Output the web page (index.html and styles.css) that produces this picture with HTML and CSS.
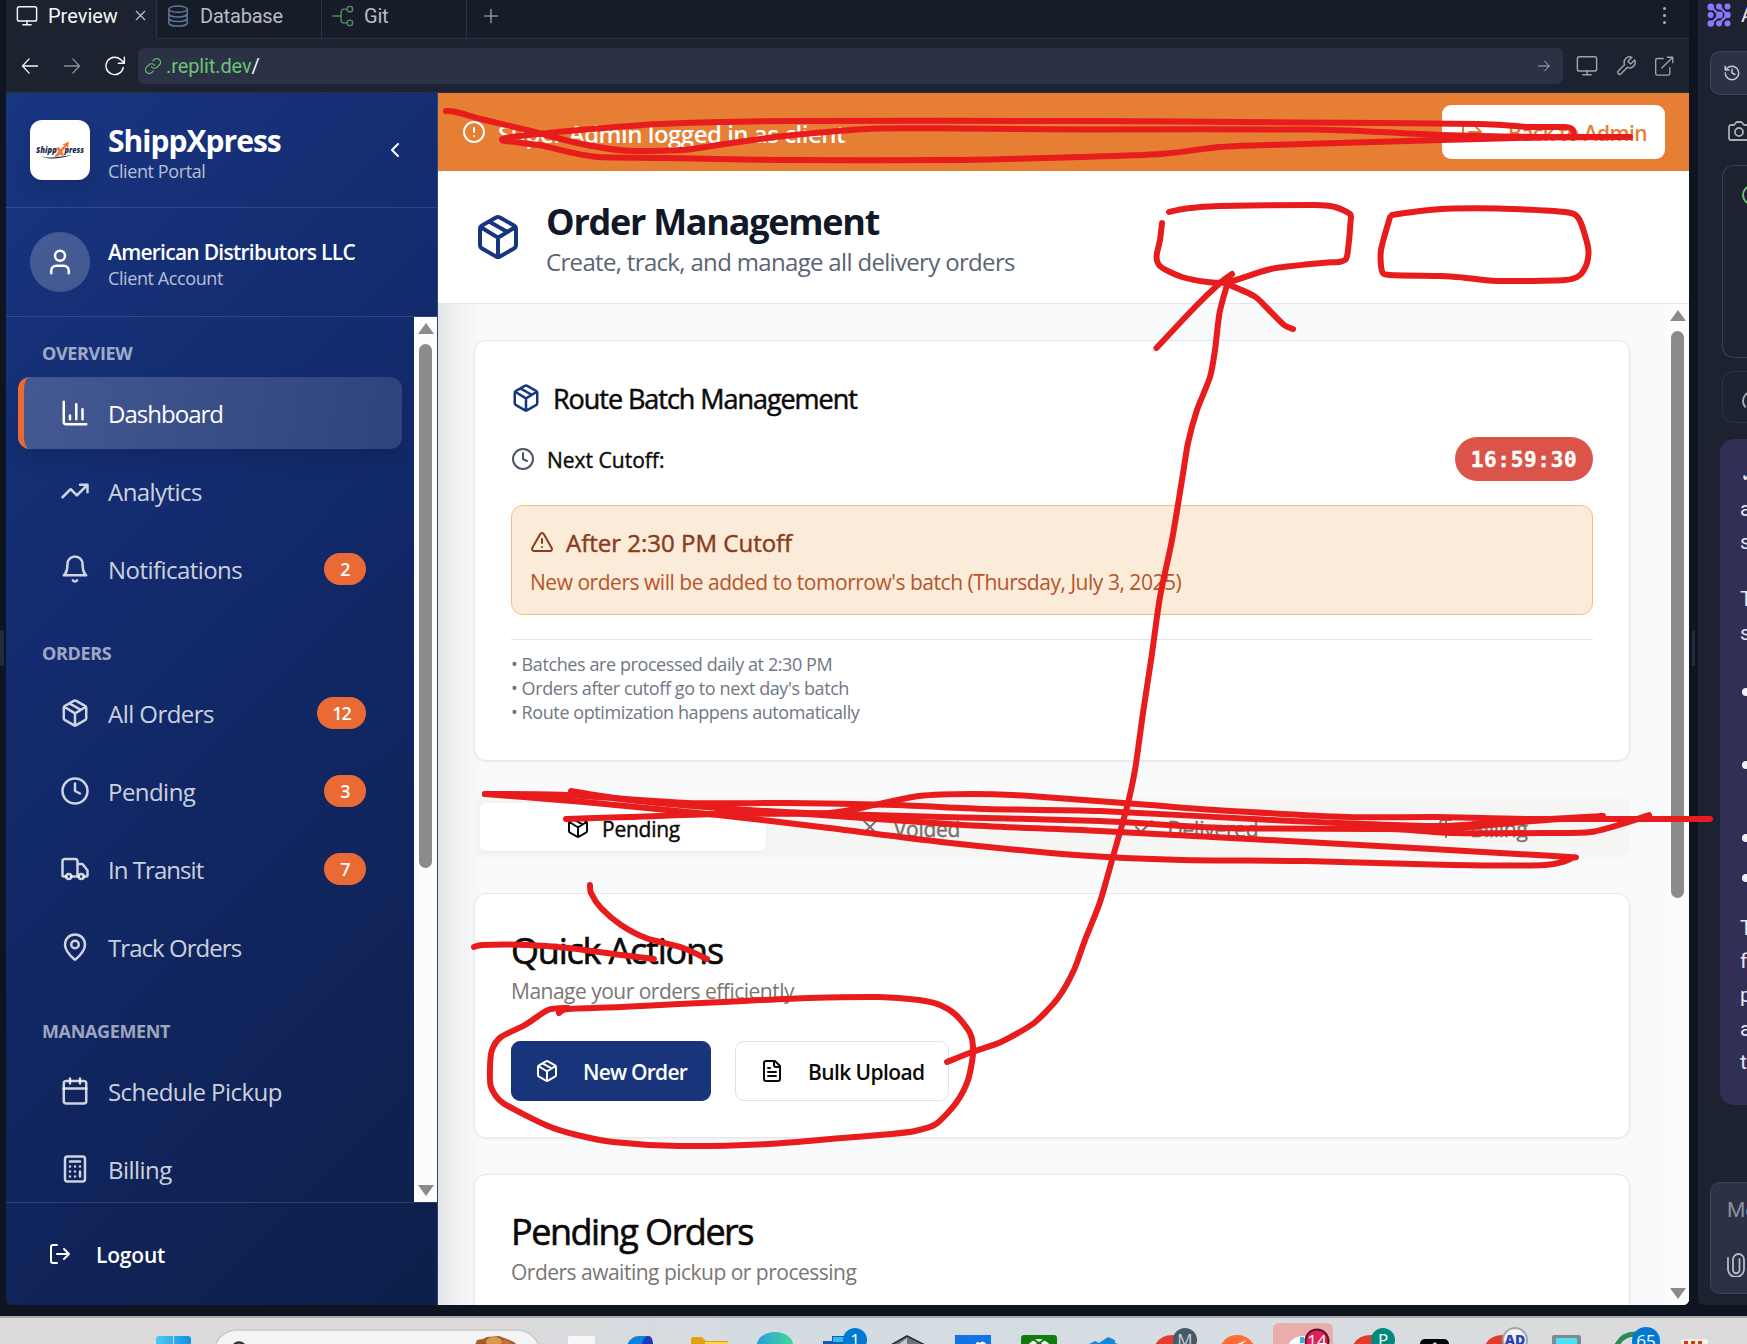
FILE: index.html
```html
<!DOCTYPE html>
<html lang="en">
<head>
<meta charset="utf-8">
<title>ShippXpress - Order Management</title>
<link rel="stylesheet" href="styles.css">
</head>
<body>
<svg class="defs" aria-hidden="true">
  <symbol id="package" viewBox="0 0 24 24"><path d="M11 21.73a2 2 0 0 0 2 0l7-4A2 2 0 0 0 21 16V8a2 2 0 0 0-1-1.73l-7-4a2 2 0 0 0-2 0l-7 4A2 2 0 0 0 3 8v8a2 2 0 0 0 1 1.73zM12 22V12M3.3 7l7.703 4.734a2 2 0 0 0 1.994 0L20.7 7M7.5 4.27l9 5.15"/></symbol>
  <symbol id="chart" viewBox="0 0 24 24"><path d="M3 3v16a2 2 0 0 0 2 2h16M18 17V9M13 17V5M8 17v-3"/></symbol>
  <symbol id="trend" viewBox="0 0 24 24"><path d="M22 7l-8.500 8.500-5-5L2 17M16 7h6v6"/></symbol>
  <symbol id="bell" viewBox="0 0 24 24"><path d="M6 8a6 6 0 0 1 12 0c0 7 3 9 3 9H3s3-2 3-9M10.300 21a1.940 1.940 0 0 0 3.400 0"/></symbol>
  <symbol id="clock" viewBox="0 0 24 24"><circle cx="12" cy="12" r="10"/><path d="M12 6v6l4 2"/></symbol>
  <symbol id="truck" viewBox="0 0 24 24"><path d="M14 18V6a2 2 0 0 0-2-2H4a2 2 0 0 0-2 2v11a1 1 0 0 0 1 1h2M15 18H9M19 18h2a1 1 0 0 0 1-1v-3.650a1 1 0 0 0-.22-.624l-3.480-4.350A1 1 0 0 0 17.520 8H14"/><circle cx="17" cy="18" r="2"/><circle cx="7" cy="18" r="2"/></symbol>
  <symbol id="pin" viewBox="0 0 24 24"><path d="M20 10c0 4.993-5.539 10.193-7.399 11.799a1 1 0 0 1-1.202 0C9.539 20.193 4 14.993 4 10a8 8 0 0 1 16 0"/><circle cx="12" cy="10" r="3"/></symbol>
  <symbol id="calendar" viewBox="0 0 24 24"><rect x="3" y="4" width="18" height="18" rx="2"/><path d="M8 2v4M16 2v4M3 10h18"/></symbol>
  <symbol id="calc" viewBox="0 0 24 24"><rect x="4" y="2" width="16" height="20" rx="2"/><path d="M8 6h8M16 14v4M16 10h.01M12 10h.01M8 10h.01M12 14h.01M8 14h.01M12 18h.01M8 18h.01"/></symbol>
  <symbol id="logout" viewBox="0 0 24 24"><path d="M9 21H5a2 2 0 0 1-2-2V5a2 2 0 0 1 2-2h4M16 17l5-5-5-5M21 12H9"/></symbol>
  <symbol id="user" viewBox="0 0 24 24"><path d="M19 21v-2a4 4 0 0 0-4-4H9a4 4 0 0 0-4 4v2"/><circle cx="12" cy="7" r="4"/></symbol>
  <symbol id="alert" viewBox="0 0 24 24"><circle cx="12" cy="12" r="10"/><path d="M12 8v4M12 16h.01"/></symbol>
  <symbol id="warn" viewBox="0 0 24 24"><path d="M21.730 18l-8-14a2 2 0 0 0-3.480 0l-8 14A2 2 0 0 0 4 21h16a2 2 0 0 0 1.730-3M12 9v4M12 17h.01"/></symbol>
  <symbol id="file" viewBox="0 0 24 24"><path d="M15 2H6a2 2 0 0 0-2 2v16a2 2 0 0 0 2 2h12a2 2 0 0 0 2-2V7ZM14 2v4a2 2 0 0 0 2 2h4M10 9H8M16 13H8M16 17H8"/></symbol>
  <symbol id="chevron" viewBox="0 0 24 24"><path d="M15 18l-6-6 6-6"/></symbol>
  <symbol id="x" viewBox="0 0 24 24"><path d="M18 6L6 18M6 6l12 12"/></symbol>
  <symbol id="check" viewBox="0 0 24 24"><path d="M20 6L9 17l-5-5"/></symbol>
  <symbol id="dollar" viewBox="0 0 24 24"><path d="M12 2v20M17 5H9.500a3.500 3.500 0 0 0 0 7h5a3.500 3.500 0 0 1 0 7H6"/></symbol>
  <symbol id="monitor" viewBox="0 0 24 24"><rect x="1.500" y="2" width="21" height="15.500" rx="2"/><path d="M12 17.500V21.500M7.500 21.500h9"/></symbol>
  <symbol id="plus" viewBox="0 0 24 24"><path d="M12 2v20M2 12h20"/></symbol>
  <symbol id="left" viewBox="0 0 24 24"><path d="M21 12H3.500M11 3.500L3 12l8 8.500"/></symbol>
  <symbol id="right" viewBox="0 0 24 24"><path d="M3 12h17.500M13 3.500l8 8.500-8 8.500"/></symbol>
  <symbol id="reload" viewBox="0 0 24 24"><path d="M21 13.500a9.500 9.500 0 1 1-2.300-8L22 8.500M22.200 2.500v6.500h-6.500"/></symbol>
  <symbol id="link" viewBox="0 0 24 24"><path d="M10 13a5 5 0 0 0 7.540.54l3-3a5 5 0 0 0-7.070-7.070l-1.720 1.710M14 11a5 5 0 0 0-7.540-.54l-3 3a5 5 0 0 0 7.070 7.070l1.710-1.710"/></symbol>
  <symbol id="db" viewBox="0 0 24 24"><ellipse cx="12" cy="4.500" rx="10" ry="3.500"/><path d="M2 4.500v15c0 2 4.500 3.500 10 3.500s10-1.500 10-3.500v-15M2 9.500c0 2 4.500 3.500 10 3.500s10-1.500 10-3.500M2 14.500c0 2 4.500 3.500 10 3.500s10-1.500 10-3.500"/></symbol>
  <symbol id="git" viewBox="0 0 24 24"><path d="M1 12h9M16 4.500h-3a3 3 0 0 0-3 3v9a3 3 0 0 0 3 3h3"/><circle cx="19.500" cy="4.500" r="3"/><circle cx="19.500" cy="19.500" r="3"/></symbol>
  <symbol id="wrench" viewBox="0 0 24 24"><path d="M14.700 6.300a1 1 0 0 0 0 1.400l1.600 1.600a1 1 0 0 0 1.400 0l3.770-3.770a6 6 0 0 1-7.940 7.940l-6.910 6.910a2.120 2.120 0 0 1-3-3l6.910-6.910a6 6 0 0 1 7.940-7.940z"/></symbol>
  <symbol id="external" viewBox="0 0 24 24"><path d="M11 3H4a2 2 0 0 0-2 2v16a2 2 0 0 0 2 2h13a2 2 0 0 0 2-2v-7M16 1.500h6.500V8M22.500 1.500L9.500 14.500"/></symbol>
  <symbol id="history" viewBox="0 0 24 24"><path d="M3 12a9 9 0 1 0 9-9 9.750 9.750 0 0 0-6.740 2.740L3 8M3 3v5h5M12 7v5l4 2"/></symbol>
  <symbol id="camera" viewBox="0 0 24 24"><path d="M14.500 3h-5L7 6H4a2 2 0 0 0-2 2v11a2 2 0 0 0 2 2h16a2 2 0 0 0 2-2V8a2 2 0 0 0-2-2h-3z"/><circle cx="12" cy="13" r="4"/></symbol>
  <symbol id="clip" viewBox="0 0 24 24"><path d="M15.500 6v11a3 3 0 0 1-6.500 0V6.500a5 5 0 0 1 11 0V16a8 8 0 0 1-16 0V5"/></symbol>
</svg>

<div class="workspace">
  <div class="gutter"><span class="grip"></span></div>
  <section class="pane">
    <div class="tabbar">
      <div class="tab tab-active"><svg class="i22"><use href="#monitor"/></svg><span>Preview</span><svg class="i17 close"><use href="#x"/></svg></div>
      <div class="tab tab-db"><svg class="i22 blue"><use href="#db"/></svg><span>Database</span></div>
      <div class="tab tab-git"><svg class="i22 green"><use href="#git"/></svg><span>Git</span></div>
      <div class="tab-rest"><svg class="i16"><use href="#plus"/></svg><span class="dots"><i></i><i></i><i></i></span></div>
    </div>
    <div class="toolbar">
      <svg class="i20 bright"><use href="#left"/></svg>
      <svg class="i20 dim"><use href="#right"/></svg>
      <svg class="i22 bright"><use href="#reload"/></svg>
      <div class="url"><svg class="i18"><use href="#link"/></svg><span class="host">.replit.dev<b>/</b></span><svg class="i14 go"><use href="#right"/></svg></div>
      <svg class="i22 tool"><use href="#monitor"/></svg>
      <svg class="i22 tool"><use href="#wrench"/></svg>
      <svg class="i20 tool"><use href="#external"/></svg>
    </div>
    <div class="app">
      <aside class="sidebar">
        <div class="brand">
          <div class="logo"><svg viewBox="0 0 60 60" width="60" height="60"><text x="6" y="33" textLength="21" lengthAdjust="spacingAndGlyphs" class="lg">Shipp</text><text x="34.500" y="33" textLength="19.500" lengthAdjust="spacingAndGlyphs" class="lg">press</text><path d="M24 36.500L34.500 25l-2.500-.3 7-3.200-1 6.500-1.700-1.500-8 10z" fill="#f0793a"/><path d="M26 27.500h3.500l5 8H31z" fill="#f0793a"/><path d="M11 36c8 3 16 1 31-1-12 4-24 5-31 1z" fill="#1b2c50"/></svg></div>
          <div class="names"><div class="brand-name">ShippXpress</div><div class="muted">Client Portal</div></div>
          <svg class="i24 collapse"><use href="#chevron"/></svg>
        </div>
        <div class="account">
          <div class="avatar"><svg class="i30"><use href="#user"/></svg></div>
          <div class="names"><div class="acct-name">American Distributors LLC</div><div class="muted">Client Account</div></div>
        </div>
        <div class="navwrap">
          <nav class="nav">
            <div class="group"><div class="label">OVERVIEW</div>
              <a class="item current"><svg class="i30"><use href="#chart"/></svg><span>Dashboard</span></a>
              <a class="item"><svg class="i30"><use href="#trend"/></svg><span>Analytics</span></a>
              <a class="item"><svg class="i30"><use href="#bell"/></svg><span>Notifications</span><em>2</em></a></div>
            <div class="group"><div class="label">ORDERS</div>
              <a class="item"><svg class="i30"><use href="#package"/></svg><span>All Orders</span><em>12</em></a>
              <a class="item"><svg class="i30"><use href="#clock"/></svg><span>Pending</span><em>3</em></a>
              <a class="item snug"><svg class="i30"><use href="#truck"/></svg><span>In Transit</span><em>7</em></a>
              <a class="item snug"><svg class="i30"><use href="#pin"/></svg><span>Track Orders</span></a></div>
            <div class="group"><div class="label">MANAGEMENT</div>
              <a class="item"><svg class="i30"><use href="#calendar"/></svg><span>Schedule Pickup</span></a>
              <a class="item"><svg class="i30"><use href="#calc"/></svg><span>Billing</span></a></div>
          </nav>
          <div class="scroll"><i class="up"></i><i class="thumb"></i><i class="down"></i></div>
        </div>
        <div class="logout"><svg class="i24"><use href="#logout"/></svg><span>Logout</span></div>
      </aside>
      <main class="main">
        <div class="banner"><svg class="i24"><use href="#alert"/></svg><span class="banner-text">Super Admin logged in as client</span>
          <button class="back"><svg class="i24"><use href="#logout"/></svg><span>Back to Admin</span></button></div>
        <header class="head"><svg class="i48"><use href="#package"/></svg><div><h1>Order Management</h1><p>Create, track, and manage all delivery orders</p></div></header>
        <div class="body">
          <div class="content">
            <section class="card route">
              <div class="route-title"><svg class="i30"><use href="#package"/></svg><span>Route Batch Management</span></div>
              <div class="cutoff"><svg class="i24"><use href="#clock"/></svg><span class="cut">Next Cutoff:</span><span class="timer">16:59:30</span></div>
              <div class="notice"><div class="notice-title"><svg class="i24"><use href="#warn"/></svg><span>After 2:30 PM Cutoff</span></div><p>New orders will be added to tomorrow's batch (Thursday, July 3, 2025)</p></div>
              <div class="notes"><div>• Batches are processed daily at 2:30 PM</div><div>• Orders after cutoff go to next day's batch</div><div>• Route optimization happens automatically</div></div>
            </section>
            <div class="tabs">
              <div class="t on"><svg class="i24"><use href="#package"/></svg><span>Pending</span></div>
              <div class="t"><svg class="i24"><use href="#x"/></svg><span>Voided</span></div>
              <div class="t"><svg class="i24"><use href="#check"/></svg><span>Delivered</span></div>
              <div class="t"><svg class="i24"><use href="#dollar"/></svg><span>Billing</span></div>
            </div>
            <section class="card quick">
              <h2>Quick Actions</h2><p>Manage your orders efficiently</p>
              <div class="actions"><button class="btn primary"><svg class="i24"><use href="#package"/></svg><span>New Order</span></button><button class="btn"><svg class="i24"><use href="#file"/></svg><span>Bulk Upload</span></button></div>
            </section>
            <section class="card pend">
              <h2>Pending Orders</h2><p>Orders awaiting pickup or processing</p>
            </section>
          </div>
          <div class="scroll scroll-main"><i class="up"></i><i class="thumb"></i><i class="down"></i></div>
        </div>
      </main>
    </div>
  </section>
  <div class="gutter mid"><span class="grip"></span></div>
  <aside class="agent">
    <div class="agent-head"><svg viewBox="0 0 24 24" width="24" height="24"><g fill="#8b78ff"><circle cx="3.800" cy="4" r="3.400"/><circle cx="12" cy="3.500" r="3"/><circle cx="20.500" cy="3.500" r="3"/><circle cx="3.600" cy="12" r="3"/><circle cx="12.500" cy="12" r="3.400"/><circle cx="20.500" cy="12" r="3.200"/><circle cx="3.800" cy="20.500" r="3.300"/><circle cx="12" cy="20.500" r="3"/><circle cx="20.500" cy="20.500" r="3"/></g><path d="M4 4l8.500 8L4 20.500M12 3.500l8.500 8.500-8.500 8.500" fill="none" stroke="#8b78ff" stroke-width="2.200"/></svg><span>A</span></div>
    <div class="agent-btn"><svg class="i18"><use href="#history"/></svg></div>
    <div class="agent-cam"><svg class="i24"><use href="#camera"/></svg></div>
    <div class="agent-box ok"><i></i></div>
    <div class="agent-box arc"><i></i></div>
    <div class="agent-msg"><p>✓<br>a<br>s</p><p>T<br>s</p><ul><li></li><li></li><li></li><li></li></ul><p>T<br>f<br>p<br>a<br>t</p></div>
    <div class="agent-input"><span>Me</span><svg class="i24"><use href="#clip"/></svg></div>
  </aside>
</div>

<footer class="taskbar">
  <svg width="1747" height="27" viewBox="0 1317 1747 27">
    <defs><linearGradient id="win" x1="0" x2="1"><stop offset="0" stop-color="#4ccbfb"/><stop offset="1" stop-color="#1390df"/></linearGradient><linearGradient id="edge" x1="0" x2="1"><stop offset="0" stop-color="#2d9de0"/><stop offset="1" stop-color="#3edc93"/></linearGradient></defs>
    <path d="M156 1344v-6a3 3 0 0 1 3-3h14v9zM174 1344v-9h14a3 3 0 0 1 3 3v6z" fill="url(#win)"/>
    <path d="M214 1352a23 23 0 0 1 23-23h280a23 23 0 0 1 23 23" fill="#f4f4f4" stroke="#c9c9c9" stroke-width="1.500"/>
    <circle cx="239" cy="1348" r="6.500" fill="none" stroke="#333" stroke-width="2.500"/>
    <path d="M475 1344l2-5 6-1 4-2 12-1 8 3 7 3 3 3z" fill="#a55c2c"/><ellipse cx="494" cy="1341" rx="8" ry="5" fill="#d89a49"/><path d="M499 1344l6-6 8 6z" fill="#c76b3a"/>
    <path d="M568 1344v-7q0-2 2-2h23q2 0 2 2v7z" fill="#f7f7f7"/>
    <path d="M627 1344q4-9 12-9h10l-7 9z" fill="#0a84dc"/><path d="M642 1344q1-9 7-9 4 1 4 9z" fill="#1c39b8"/>
    <path d="M691 1344v-6a2 2 0 0 1 2-2h9l4 4h22v4z" fill="#e0a20c"/><path d="M705 1344v-3h23v3z" fill="#ffd34c"/>
    <path d="M757 1344a18 13 0 0 1 36 0z" fill="url(#edge)"/>
    <path d="M823 1344v-4h9v-5h12v9z" fill="#0e5fae"/><rect x="833" y="1336" width="14" height="5" fill="#35b7f2"/>
    <path d="M891 1344l16-9 18 9z" fill="#70757c" stroke="#25282d" stroke-width="1.500"/><path d="M898 1344l9-7v7z" fill="#c6c9cc"/>
    <rect x="955" y="1334" width="36" height="12" fill="#1273e6"/><path d="M975 1344q2-5 5-2 3-4 7 2" fill="#fff"/>
    <rect x="1021" y="1334" width="36" height="14" rx="3" fill="#107c10"/><path d="M1027 1345q12-14 24 0" fill="#fff"/><path d="M1034 1339l10 6M1044 1339l-10 6" stroke="#107c10" stroke-width="2"/>
    <path d="M1087 1344l8-4 4 2 9-6 7 3v3l6 2z" fill="#1189dc"/>
    <path d="M1155 1344q5-10 18-10 12 0 18 10z" fill="#e33b2e"/>
    <path d="M1221 1344q5-10 16-10t17 10z" fill="#ff6c37"/><path d="M1235 1344l12-5-6 5z" fill="#fff"/>
    <rect x="1273" y="1322" width="60" height="28" rx="6" fill="#e9aeab"/>
    <path d="M1288 1344q6-10 17-9l9 9z" fill="#fff"/><path d="M1300 1336h4v6h-4z" fill="#34b4e5"/>
    <path d="M1353 1344q5-10 18-10 12 0 18 10z" fill="#e33b2e"/>
    <path d="M1420 1350v-7a5 5 0 0 1 5-5h19a5 5 0 0 1 5 5v7z" fill="#050505"/><path d="M1431 1344l4-3 3 3z" fill="#ddd"/>
    <path d="M1485 1344q5-10 18-10 12 0 18 10z" fill="#e33b2e"/>
    <path d="M1552 1344v-8q0-2 2-2h25q2 0 2 2v8z" fill="#7d8a94"/><rect x="1556" y="1337" width="21" height="7" fill="#4de0f5"/>
    <path d="M1617 1344q6-11 18-11" fill="none" stroke="#2e8b57" stroke-width="5"/>
    <rect x="1681" y="1338" width="27" height="10" rx="3" fill="#f7f3ef"/><path d="M1684 1344v-4h4v4zM1691 1344v-4h4v4zM1698 1344v-4h4v4z" fill="#d83b01"/>
    <circle cx="855" cy="1339" r="12" fill="#0078d4"/><circle cx="1185" cy="1339" r="12" fill="#455a64"/><circle cx="1317" cy="1340" r="11.500" fill="#e01e5a" stroke="#5b1230"/><circle cx="1383" cy="1339" r="12" fill="#00897b"/><circle cx="1515" cy="1339" r="12" fill="#f1f1f6" stroke="#9aa"/><circle cx="1646" cy="1340" r="14" fill="#0078d4"/>
    <g class="tb"><text x="855" y="1345">1</text><text x="1185" y="1345" fill="#ccd">M</text><text x="1317" y="1346">14</text><text x="1383" y="1345">P</text><text x="1515" y="1344" class="ad">AD</text><text x="1646" y="1346">65</text></g>
  </svg>
</footer>

<svg class="ink" width="1747" height="1344" viewBox="0 0 1747 1344">
  <path data-pts="446,111 456,112 485,120 535,132 577,143 624,150.500 682,150 725,144 775,137 809,133.500 876,128.500 960,128.500 1090,129.500 1314,129.500 1441,135 1540,137 1630,137 1540,137.500 1441,140 1267,145 1220,147 1161,154 1080,157 956,160 779,160 666,158 598,157 569,152 539,145 503,140.500 512,137 569,131 661,124 788,121 1090,121 1300,122.500 1480,124 1527,127 1565,127 1573,130 1573,138"/>
  <path data-pts="1169,212 1186,208.500 1220,206 1314,205 1335,207 1350,214 1350.500,222 1348,250 1346,259 1339,262 1322,263 1271,269 1229,282 1208,282 1182,277 1161,267 1156.500,257 1160,240 1162,223"/>
  <path data-pts="1392,215 1420,211 1454,208.500 1497,208.500 1565,212 1579,219 1588,247 1587,263 1580,275 1565,280 1497,281 1463,277.500 1441,276 1390,275 1382,271 1381,250 1390,217"/>
  <path data-pts="1156.500,348 1195,307 1220,283 1232,274"/>
  <path data-pts="1225,283 1254,296 1267,308 1284,325 1293,329"/>
  <path data-pts="1230,276 1227,285 1219.500,313 1215,350 1210,377 1197,410 1188,443 1182,480 1172,540 1160,597 1151.500,657 1143,713 1135,770 1127,807 1114,853 1100,902 1085,940 1074,970 1058,998 1034,1023 1001,1042 972,1052 947,1062"/>
  <path data-pts="559,1013 568,1009 621,1007 679,1004 744,1001 809,998 879,997 919,1000 940,1005 956,1015 970,1033 973,1053 968,1080 956,1103 936,1124 915,1131 891,1134 842,1138 768,1144 679,1146 613,1142 577,1135 548,1126 503,1103 491,1087 490,1067 492,1050 501,1037 525,1025 548,1010 568,1008"/>
  <path data-pts="474,947 483,945 527.500,945 568,948 613,954 654,959"/>
  <path data-pts="590,885 591,893 601,908 621,925 646,938 683,948 707,959"/>
  <path data-pts="485,794 566,795 687,803 789,803 896,805 986,809 1100,811 1273,820 1438,826 1533,820 1603,816 1533,821 1438,830"/>
  <path data-pts="485,794 584,802 718,815 829,828 941,842 1075,855 1182,860 1306,861 1451,865 1545,865 1572,858 1554,856 1306,842 1100,831 963,825 807,814 718,811"/>
  <path data-pts="566,819 629,817 718,814 829,813 874,805 919,796 972,794 1030,796 1150,805 1215,810 1347,817 1438,817 1533,819 1710,819"/>
  <path data-pts="571,791 629,800 718,808 807,813 941,817 1100,821 1224,828 1389,829 1451,833 1545,833 1591,832 1628,822 1649,815"/>
</svg>
<script src="ink.js"></script>
</body>
</html>
```
FILE: ink.js
```js
// Turns each stroke's list of pen positions into a smooth curve.
document.querySelectorAll('.ink path').forEach(function (path) {
  var p = path.dataset.pts.trim().split(/\s+/).map(function (s) { return s.split(',').map(Number); });
  var d = 'M' + p[0];
  for (var i = 0; i < p.length - 1; i++) {
    var a = p[i - 1] || p[i], b = p[i], c = p[i + 1], e = p[i + 2] || c;
    d += 'C' + [b[0] + (c[0] - a[0]) / 8, b[1] + (c[1] - a[1]) / 8, c[0] - (e[0] - b[0]) / 8, c[1] - (e[1] - b[1]) / 8, c[0], c[1]].join(' ');
  }
  path.setAttribute('d', d);
});
```
FILE: styles.css
```css
* { box-sizing: border-box; }
body { margin: 0; width: 1747px; height: 1344px; overflow: hidden; background: #0e1420; font-family: "Open Sans", "Noto Sans", sans-serif; position: relative; }
svg { display: block; flex: none; fill: none; stroke: currentColor; stroke-width: 2; stroke-linecap: round; stroke-linejoin: round; }
.defs { position: absolute; width: 0; height: 0; }
h1, h2, p, ul { margin: 0; padding: 0; font-weight: 400; }
button { font: inherit; border: 0; margin: 0; }
.i14 { width: 14px; height: 14px; } .i16 { width: 16px; height: 16px; } .i17 { width: 17px; height: 17px; } .i18 { width: 18px; height: 18px; }
.i20 { width: 20px; height: 20px; } .i22 { width: 22px; height: 22px; } .i24 { width: 24px; height: 24px; }
.i30 { width: 30px; height: 30px; } .i48 { width: 48px; height: 48px; }

.workspace { display: flex; height: 1316px; }
.gutter { width: 6px; height: 1305px; position: relative; flex: none; }
.gutter.mid { width: 9px; }
.grip { position: absolute; left: 0; top: 630px; width: 4px; height: 36px; border-radius: 2px; background: #252b3c; }
.mid .grip { left: 3px; width: 3px; }
.pane { width: 1683px; height: 1305px; flex: none; display: flex; flex-direction: column; background: #1c2230; border-radius: 0 0 6px 6px; overflow: hidden; }
.tabbar { display: flex; height: 39px; flex: none; font-family: "Roboto", sans-serif; font-size: 20px; letter-spacing: -.2px; color: #b9bcc4; }
.tabbar svg, .toolbar svg { stroke-width: 1.6; }
.tab { display: flex; align-items: center; padding-bottom: 7px; border-right: 1px solid #2b3245; border-bottom: 1px solid #2b3245; background: #171c29; }
.tab-active { width: 151px; padding-left: 10px; background: none; border-bottom: 0; color: #f5f6f8; padding-bottom: 8px; }
.tab-active span { margin-left: 10px; width: 80px; letter-spacing: 0; }
.tab-active .close { margin-left: 4px; color: #c2c6ce; }
.tab-db { width: 165px; padding-left: 10px; gap: 11px; }
.tab-git { width: 145px; padding-left: 10px; gap: 10px; }
.blue { color: #61789a; } .green { color: #4f8c5b; }
.tab-rest { flex: 1; display: flex; justify-content: space-between; align-items: center; padding: 0 23px 7px 16px; background: #171c29; border-bottom: 1px solid #2b3245; }
.dots { display: flex; flex-direction: column; gap: 4px; }
.dots i { width: 3px; height: 3px; border-radius: 50%; background: #a9adb5; }
.toolbar { height: 54px; flex: none; display: flex; align-items: center; padding-left: 14px; border-bottom: 1px solid #2a3042; }
.bright { color: #f5f6f8; } .dim { color: #8c9099; margin: 0 22px 0 22px; } .tool { color: #a0a4ac; margin-left: 17px; }
.url + .tool { margin-left: 13px; }
.url { width: 1425px; height: 36px; margin-left: 12px; border-radius: 6px; background: #2b3245; display: flex; align-items: center; padding: 0 12px 0 6px; color: #6cc275; font: 20px "Roboto", sans-serif; }
.host { margin-left: 4px; flex: 1; letter-spacing: -.1px; }
.host b { font-weight: 400; color: #f5f6f8; }
.go { color: #b9bcc4; }

.app { flex: 1; display: flex; min-height: 0; }
.sidebar { width: 432px; flex: none; display: flex; flex-direction: column; color: #fff; background: linear-gradient(135deg, #183580 0%, #12296a 45%, #0d1f4a 100%); border-right: 1px solid #2b4380; }
.brand { height: 115px; display: flex; align-items: center; padding: 0 24px; border-bottom: 1px solid rgba(255,255,255,.13); }
.logo { width: 60px; height: 60px; border-radius: 12px; background: #fff; box-shadow: 0 12px 18px rgba(0,0,0,.1); }
.logo svg { stroke: none; }
.lg { font: italic 800 8px "Open Sans", sans-serif; fill: #1b2c50; }
.names { margin-left: 18px; flex: 1; white-space: nowrap; padding-top: 4px; }
.brand-name { font-size: 30px; font-weight: 700; line-height: 37px; letter-spacing: -.98px; }
.muted { font-size: 18px; line-height: 24px; letter-spacing: -.4px; color: rgba(255,255,255,.7); }
.collapse { margin-right: 6px; }
.account { height: 109px; display: flex; align-items: center; padding: 0 24px; border-bottom: 1px solid rgba(255,255,255,.13); }
.account .names { padding-top: 3px; }
.avatar { width: 60px; height: 60px; border-radius: 50%; background: rgba(255,255,255,.2); display: grid; place-items: center; }
.acct-name { font-size: 21px; font-weight: 600; line-height: 28px; letter-spacing: -.74px; }
.navwrap { height: 885px; display: flex; overflow: hidden; flex: none; }
.nav { flex: 1; padding: 24px 12px 0; overflow: hidden; }
.group { margin-bottom: 36px; display: flex; flex-direction: column; gap: 6px; }
.label { height: 24px; line-height: 24px; padding-left: 24px; margin-bottom: 6px; font-size: 18px; font-weight: 700; letter-spacing: -.35px; color: rgba(255,255,255,.6); }
.item { height: 72px; flex: none; display: flex; align-items: center; padding: 0 36px 0 42px; border-radius: 12px; font-size: 24px; letter-spacing: -.55px; color: rgba(255,255,255,.8); }
.item span { margin-left: 18px; white-space: nowrap; padding-top: 1px; }
.item em { margin-left: auto; min-width: 42px; height: 32px; padding: 0 15px; border-radius: 16px; background: #ea6a35; color: #fff; font: 600 18px/32px "Open Sans", sans-serif; letter-spacing: -.9px; text-align: center; }
.snug { letter-spacing: -.95px; }
.current { letter-spacing: -.98px; color: #fff; border-left: 6px solid #ea6a35; padding-left: 36px; background: linear-gradient(90deg, rgba(255,255,255,.2), rgba(255,255,255,.12)); box-shadow: 0 12px 18px rgba(0,0,0,.1); }
.scroll { width: 23px; flex: none; background: #fcfcfc; display: flex; flex-direction: column; align-items: center; }
.up { width: 0; height: 0; border: 8px solid transparent; border-top: 0; border-bottom: 11px solid #8b8b8b; margin: 6px 0 10px; }
.down { width: 0; height: 0; border: 8px solid transparent; border-bottom: 0; border-top: 11px solid #8b8b8b; margin: auto 0 6px; }
.thumb { width: 13px; height: 524px; border-radius: 7px; background: #8b8b8b; }
.scroll-main .thumb { height: 567px; }
.logout { flex: 1; display: flex; align-items: center; padding-left: 42px; border-top: 1px solid rgba(255,255,255,.13); font-size: 21px; font-weight: 600; letter-spacing: -.2px; }
.logout span { margin-left: 24px; padding-top: 2px; }

.main { flex: 1; display: flex; flex-direction: column; background: #fff; min-width: 0; }
.banner { height: 78px; flex: none; background: #e67e33; color: #fff; display: flex; align-items: center; padding: 0 24px; font-size: 21px; font-weight: 600; white-space: nowrap; }
.banner-text { margin-left: 12px; padding-top: 3px; font-size: 24px; letter-spacing: -.5px; }
.back { margin-left: auto; width: 223px; height: 54px; border-radius: 9px; background: #fff; color: #e67e33; display: flex; align-items: center; padding-left: 18px; font-weight: 600; }
.back span { margin-left: 24px; padding-top: 2px; letter-spacing: -.6px; }
.head { height: 133px; flex: none; padding: 0 36px; display: flex; align-items: center; border-bottom: 1px solid #e2e4e7; color: #18357f; white-space: nowrap; }
.head div { margin-left: 24px; padding-top: 4px; }
h1 { font-size: 36px; font-weight: 700; line-height: 45px; letter-spacing: -1.27px; color: #111827; }
.head p { font-size: 24px; line-height: 36px; letter-spacing: -.67px; color: #5b6472; }
.body { flex: 1; display: flex; min-height: 0; background: linear-gradient(90deg, #e3e4e6 0, #eff1f3 18px, #f8fafc 44px); }
.content { flex: 1; padding: 36px 36px 0; display: flex; flex-direction: column; gap: 36px; overflow: hidden; color: #0c0a09; white-space: nowrap; }
.card { flex: none; background: #fff; border: 1px solid #e5e7e9; border-radius: 12px; padding: 36px; box-shadow: 0 1px 3px rgba(0,0,0,.06); }
.route { height: 421px; }
.route-title { display: flex; align-items: center; height: 42px; font-size: 27px; letter-spacing: -1.05px; -webkit-text-stroke: .5px; }
.route-title svg { color: #18357f; }
.route-title span { margin-left: 12px; padding-top: 1px; }
.cutoff { display: flex; align-items: center; height: 44px; margin: 18px 0 24px; font-size: 21px; -webkit-text-stroke: .4px; }
.cutoff svg { color: #4b5563; }
.cut { margin-left: 12px; padding-top: 2px; }
.timer { margin-left: auto; width: 138px; height: 44px; border-radius: 22px; background: #db5449; color: #fff; text-align: center; font: 700 21px/46px "DejaVu Sans Mono", monospace; letter-spacing: .7px; }
.notice { height: 110px; border: 1px solid #f1bf82; border-radius: 12px; background: #faecd8; padding: 17px 18px; color: #b9532b; }
.notice-title { display: flex; align-items: center; gap: 12px; height: 38px; font-size: 24px; color: #8c3a1c; -webkit-text-stroke: .45px; }
.notice p { font-size: 21px; line-height: 42px; letter-spacing: -.47px; }
.notes { margin-top: 24px; border-top: 1px solid #e1e3e6; padding-top: 12px; font-size: 18px; line-height: 24px; letter-spacing: -.41px; color: #6f7785; }
.tabs { height: 60px; flex: none; padding: 6px; border-radius: 9px; background: #f5f5f4; display: grid; grid-template-columns: repeat(4, 1fr); font-size: 21px; letter-spacing: -.25px; color: #78716c; -webkit-text-stroke: .4px; }
.t { display: flex; align-items: center; justify-content: center; gap: 12px; border-radius: 6px; }
.t span { padding-top: 3px; }
.on { background: #fff; color: #0c0a09; box-shadow: 0 1px 3px rgba(0,0,0,.06); }
h2 { font-size: 36px; line-height: 42px; letter-spacing: -1.2px; -webkit-text-stroke: .6px; }
.pend h2 { letter-spacing: -1.49px; }
.card p { font-size: 21px; }
.quick { height: 245px; }
.quick > p, .pend > p { line-height: 30px; margin-top: 4px; letter-spacing: -.51px; color: #7b7672; }
.actions { display: flex; gap: 24px; margin-top: 35px; }
.btn { height: 60px; width: 214px; border: 1px solid #e2e3e5; border-radius: 9px; background: #fff; color: #0c0a09; display: flex; align-items: center; padding-left: 24px; font-size: 21px; font-weight: 600; letter-spacing: -.6px; }
.btn.primary { width: 200px; background: #18357c; color: #fff; border-color: #18357c; padding-left: 23px; letter-spacing: -.77px; }
.btn span { margin-left: 24px; padding-top: 2px; }
.pend { height: 300px; }

.agent { flex: 1; height: 1305px; background: #1c2230; border-radius: 0 0 0 6px; overflow: hidden; display: flex; flex-direction: column; font-family: "Roboto", sans-serif; color: #e6e7ef; }
.agent-head { height: 51px; padding: 3px 0 0 9px; display: flex; gap: 10px; flex: none; font-size: 21px; }
.agent-head svg { stroke: none; }
.agent-btn { height: 44px; flex: none; margin-left: 12px; border: 1px solid #3c445c; border-right: 0; border-radius: 10px 0 0 10px; background: #2b3245; padding: 12px 0 0 12px; color: #c2c8cc; }
.agent-cam { height: 70px; flex: none; padding: 24px 0 0 29px; color: #a9adb5; }
.agent-cam svg, .agent-input svg { stroke-width: 1.8; }
.agent-box { flex: none; margin-left: 24px; border: 1px solid #33434f; border-right: 0; border-radius: 12px 0 0 12px; overflow: hidden; }
.agent-box i { display: block; width: 20px; height: 20px; border: 2px solid #6cc275; border-radius: 50%; margin: 19px 0 0 19px; }
.ok { height: 193px; }
.arc { height: 52px; margin-top: 13px; border-color: #2b3245; }
.arc i { border-color: #a9adb5; border-bottom-color: transparent; }
.agent-msg { height: 666px; flex: none; margin: 16px 0 0 22px; border-radius: 14px 0 0 14px; background: #322f56; padding: 20px 0 0 20px; font-size: 21px; line-height: 33.700px; }
.agent-msg p { margin-bottom: 23px; }
.agent-msg ul { list-style: none; height: 210px; padding-top: 5px; margin-bottom: 28px; }
.agent-msg li { width: 8px; height: 8px; border-radius: 50%; background: #f2f2f8; margin: 9px 0 65px 2px; }
.agent-msg li:nth-child(3) { margin-bottom: 32px; }
.agent-input { height: 112px; margin: 77px 0 0 12px; border: 1px solid #3c445c; border-right: 0; border-radius: 10px 0 0 10px; background: #2b3245; padding: 15px 0 0 16px; font-size: 21px; color: #8d919b; }
.agent-input svg { margin: 31px 0 0 -3px; color: #b9bcc4; }

.taskbar { height: 28px; border-top: 2px solid #a9a9aa; background: linear-gradient(90deg, #dcdadb 0, #dedadb 400px, #d3dce2 800px, #d6dde2 1200px, #dcdbdc 1700px); }
.taskbar svg { stroke: none; }
.tb { font: 17px "Open Sans", sans-serif; text-anchor: middle; fill: #fff; }
.ad { fill: #2b3fb5; font-weight: 800; font-size: 14px; }
.ink { position: absolute; left: 0; top: 0; z-index: 5; stroke: #e81c1c; stroke-width: 6; pointer-events: none; }
```
